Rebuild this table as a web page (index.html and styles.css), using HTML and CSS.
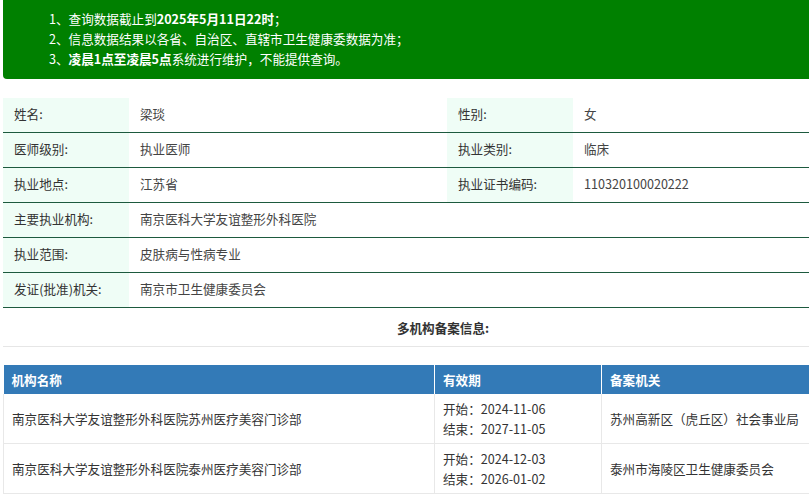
FILE: index.html
```html
<!DOCTYPE html>
<html lang="zh-CN">
<head>
<meta charset="utf-8">
<title>医师执业信息查询</title>
<link rel="stylesheet" href="styles.css">
</head>
<body>
<div class="page">
  <div class="notice">
    <ol class="notice-list">
      <li>1、查询数据截止到<b>2025年5月11日22时</b>；</li>
      <li>2、信息数据结果以各省、自治区、直辖市卫生健康委数据为准；</li>
      <li>3、<b>凌晨1点至凌晨5点</b>系统进行维护，不能提供查询。</li>
    </ol>
  </div>

  <table class="info">
    <colgroup>
      <col class="c-label"><col class="c-value"><col class="c-label"><col>
    </colgroup>
    <tr>
      <td class="label">姓名:</td><td>梁琰</td>
      <td class="label">性别:</td><td>女</td>
    </tr>
    <tr>
      <td class="label">医师级别:</td><td>执业医师</td>
      <td class="label">执业类别:</td><td>临床</td>
    </tr>
    <tr>
      <td class="label">执业地点:</td><td>江苏省</td>
      <td class="label">执业证书编码:</td><td>110320100020222</td>
    </tr>
    <tr>
      <td class="label">主要执业机构:</td><td colspan="3">南京医科大学友谊整形外科医院</td>
    </tr>
    <tr>
      <td class="label">执业范围:</td><td colspan="3">皮肤病与性病专业</td>
    </tr>
    <tr>
      <td class="label">发证(批准)机关:</td><td colspan="3">南京市卫生健康委员会</td>
    </tr>
    <tr class="title-row">
      <td colspan="4">多机构备案信息:</td>
    </tr>
  </table>

  <table class="org">
    <colgroup>
      <col class="o-name"><col class="o-date"><col>
    </colgroup>
    <thead>
      <tr><th>机构名称</th><th>有效期</th><th>备案机关</th></tr>
    </thead>
    <tbody>
      <tr>
        <td>南京医科大学友谊整形外科医院苏州医疗美容门诊部</td>
        <td><div>开始：2024-11-06</div><div>结束：2027-11-05</div></td>
        <td>苏州高新区（虎丘区）社会事业局</td>
      </tr>
      <tr>
        <td>南京医科大学友谊整形外科医院泰州医疗美容门诊部</td>
        <td><div>开始：2024-12-03</div><div>结束：2026-01-02</div></td>
        <td>泰州市海陵区卫生健康委员会</td>
      </tr>
    </tbody>
  </table>
</div>
</body>
</html>
```

FILE: styles.css
```css
html, body {
  margin: 0;
  padding: 0;
  overflow: hidden;
  background: #fff;
}

body {
  font-family: "Noto Sans CJK SC", "Noto Sans", sans-serif;
  font-size: 12.6px;
  color: #333;
}

.page {
  width: 880px;
  padding-left: 3px;
}

.notice {
  background: #008000;
  color: #fff;
  border-radius: 0 0 4px 4px;
  padding: 9px 0 10px;
  margin-bottom: 19px;
}

.notice-list {
  list-style: none;
  margin: 0;
  padding: 0 0 0 46px;
  line-height: 20px;
}

.notice-list b {
  font-weight: bold;
}

.info {
  width: 100%;
  border-collapse: collapse;
  table-layout: fixed;
}

.c-label { width: 126px; }
.c-value { width: 318px; }

.info td {
  height: 31px;
  padding: 0 11px 3px;
  border-bottom: 1px solid #1d5a3e;
  vertical-align: middle;
  color: #444;
  white-space: nowrap;
}

.info td.label {
  background: #effdf6;
  color: #333;
}

.info .title-row td {
  height: 38px;
  padding: 0 11px;
  text-align: center;
  font-weight: bold;
  color: #333;
  border-bottom: 1px solid #e6e6e6;
}

.org {
  width: 100%;
  border-collapse: collapse;
  table-layout: fixed;
  margin-top: 18px;
}

.o-name { width: 431px; }
.o-date { width: 167px; }

.org th {
  background: #337ab7;
  color: #fff;
  text-align: left;
  font-weight: bold;
  height: 29px;
  padding: 0 8px;
  border-left: 1px solid #fff;
  vertical-align: middle;
}

.org th:first-child {
  border-left: none;
}

.org td {
  height: 49px;
  padding: 0 8px;
  border: 1px solid #e8e8e8;
  border-top: none;
  vertical-align: middle;
  line-height: 20px;
  color: #333;
  white-space: nowrap;
}
```
